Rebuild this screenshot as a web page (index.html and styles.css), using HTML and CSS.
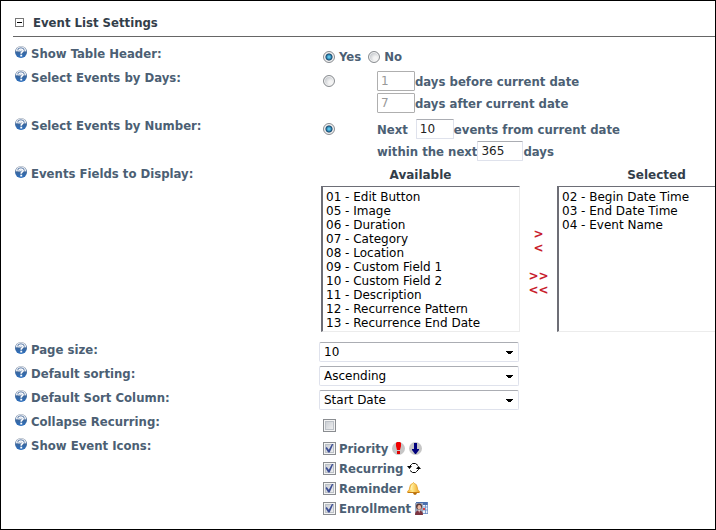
FILE: index.html
```html
<!DOCTYPE html>
<html lang="en">
<head>
<meta charset="utf-8">
<title>Event List Settings</title>
<link rel="stylesheet" href="styles.css">
</head>
<body>
<svg class="defs" width="0" height="0" aria-hidden="true">
  <defs>
    <linearGradient id="ball" x1="0" y1="0" x2="0" y2="1">
      <stop offset="0" stop-color="#8d97a5"/>
      <stop offset="0.4" stop-color="#3f6596"/>
      <stop offset="1" stop-color="#2a6fc0"/>
    </linearGradient>
    <linearGradient id="gold" x1="0" y1="0" x2="1" y2="0">
      <stop offset="0" stop-color="#f4ac28"/>
      <stop offset="0.4" stop-color="#ffe88a"/>
      <stop offset="1" stop-color="#eda020"/>
    </linearGradient>
    <symbol id="help" viewBox="0 0 12 12">
      <circle cx="6" cy="6" r="6" fill="url(#ball)"/>
      <path d="M.7 5.600A5.300 5.300 0 0 1 11.300 5.600Q9.800 5 8.500 5.500L3.400 5.500Q2 5 .7 5.600Z" fill="#e6eaf0"/>
      <path d="M3.600 4.300Q3.800 2.600 5.900 2.600T8.300 4.300Q8.300 5.300 7.100 6Q6.300 6.500 6.300 7.200" fill="none" stroke="#44699c" stroke-width="2.400"/>
      <path d="M3.800 4.500Q4 3 5.900 3T8.100 4.400Q8.100 5.300 7 6Q6.200 6.500 6.200 7.800" fill="none" stroke="#fff" stroke-width="1.600"/>
      <rect x="5.300" y="8.700" width="1.900" height="1.800" fill="#fff"/>
    </symbol>
  </defs>
</svg>
<form class="panel">
  <header class="title">
    <button type="button" class="toggle" aria-label="Collapse section"></button>
    <h1>Event List Settings</h1>
  </header>
  <div class="settings">
    <div class="row">
      <div class="label"><svg class="help"><use href="#help"/></svg><span>Show Table Header:</span></div>
      <div class="field single">
        <input type="radio" name="header" id="yes" checked><label for="yes">Yes</label>
        <input type="radio" name="header" id="no"><label for="no">No</label>
      </div>
    </div>
    <div class="row">
      <div class="label"><svg class="help"><use href="#help"/></svg><span>Select Events by Days:</span></div>
      <div class="field choice">
        <input type="radio" name="mode" aria-label="Select events by days">
        <div class="lines">
          <div class="line"><input type="text" id="before" value="1" disabled><label for="before">days before current date</label></div>
          <div class="line"><input type="text" id="after" value="7" disabled><label for="after">days after current date</label></div>
        </div>
      </div>
    </div>
    <div class="row">
      <div class="label"><svg class="help"><use href="#help"/></svg><span>Select Events by Number:</span></div>
      <div class="field choice">
        <input type="radio" name="mode" aria-label="Select events by number" checked>
        <div class="lines">
          <div class="line"><label for="count" class="spaced">Next</label><input type="text" id="count" value="10"><span>events from current date</span></div>
          <div class="line"><label for="within">within the next</label><input type="text" id="within" class="wide" value="365"><span>days</span></div>
        </div>
      </div>
    </div>
    <div class="row">
      <div class="label"><svg class="help"><use href="#help"/></svg><span>Events Fields to Display:</span></div>
      <div class="field picker">
        <div class="list">
          <label for="available">Available</label>
          <select id="available" multiple size="10">
            <option>01 - Edit Button</option><option>05 - Image</option><option>06 - Duration</option><option>07 - Category</option><option>08 - Location</option><option>09 - Custom Field 1</option><option>10 - Custom Field 2</option><option>11 - Description</option><option>12 - Recurrence Pattern</option><option>13 - Recurrence End Date</option>
          </select>
        </div>
        <div class="moves">
          <button type="button" aria-label="Add">&gt;</button>
          <button type="button" aria-label="Remove">&lt;</button>
          <button type="button" class="all" aria-label="Add all">&gt;&gt;</button>
          <button type="button" aria-label="Remove all">&lt;&lt;</button>
        </div>
        <div class="list">
          <label for="selected">Selected</label>
          <select id="selected" multiple size="10">
            <option>02 - Begin Date Time</option><option>03 - End Date Time</option><option>04 - Event Name</option>
          </select>
        </div>
      </div>
    </div>
    <div class="row short">
      <label class="label" for="size"><svg class="help"><use href="#help"/></svg><span>Page size:</span></label>
      <div class="field drop"><select id="size"><option>10</option></select></div>
    </div>
    <div class="row short">
      <label class="label" for="sorting"><svg class="help"><use href="#help"/></svg><span>Default sorting:</span></label>
      <div class="field drop"><select id="sorting"><option>Ascending</option></select></div>
    </div>
    <div class="row short">
      <label class="label" for="column"><svg class="help"><use href="#help"/></svg><span>Default Sort Column:</span></label>
      <div class="field drop"><select id="column"><option>Start Date</option></select></div>
    </div>
    <div class="row short">
      <label class="label" for="collapse"><svg class="help"><use href="#help"/></svg><span>Collapse Recurring:</span></label>
      <div class="field single"><input type="checkbox" id="collapse"></div>
    </div>
    <div class="row">
      <div class="label"><svg class="help"><use href="#help"/></svg><span>Show Event Icons:</span></div>
      <div class="field checks">
        <div class="line"><input type="checkbox" id="priority" checked><label for="priority">Priority</label>
          <svg class="icon" width="13" height="13" viewBox="0 0 13 13"><circle cx="6.500" cy="6.500" r="6.500" fill="#c6c6c6"/><path d="M5 0H8L9 1V4L8 8H5L4 4V1Z" fill="#f00000"/><rect x="5" y="9" width="3" height="3" fill="#e00000"/></svg>
          <svg class="icon" width="13" height="13" viewBox="0 0 13 13"><circle cx="6.500" cy="6.500" r="6.500" fill="#c6c6c6"/><path d="M5 1H8V7H10V8L7 12H6L3 8V7H5Z" fill="#00007c"/></svg>
        </div>
        <div class="line"><input type="checkbox" id="recurring" checked><label for="recurring">Recurring</label>
          <svg class="icon" width="14" height="12" viewBox="0 0 14 12"><path d="M2.500 6V4.500L4.500 2.500 5.500 1.500H8.500L11 3.500M11.500 5V7.500L9.500 9.500 8.500 10.500H5.500L3 8.500" fill="none" stroke="#000" stroke-width="1"/><path d="M0 4H5L2.500 7ZM9 7H14L11.500 4Z" fill="#000"/></svg>
        </div>
        <div class="line"><input type="checkbox" id="reminder" checked><label for="reminder">Reminder</label>
          <svg class="icon" width="13" height="13" viewBox="0 0 13 13"><path d="M5.500 1.500Q6.500-.5 7.500 1.500 10 2.200 10.200 5 10.300 8 12.500 9.500V10.500H.5V9.500Q2.700 8 2.800 5 3 2.200 5.500 1.500Z" fill="url(#gold)" stroke="#e09a20" stroke-width=".7"/><path d="M1 10.500H12" stroke="#c47c10"/><path d="M6 11H10L9 12.700H7Z" fill="#b56b08"/><path d="M5 3.500Q4.200 5 4 8" stroke="#fff6c4" fill="none"/></svg>
        </div>
        <div class="line"><input type="checkbox" id="enrollment" checked><label for="enrollment">Enrollment</label>
          <svg class="icon" width="13" height="13" viewBox="0 0 13 13"><rect x="1" width="12" height="12" fill="#eef2fa"/><path d="M1 0H13V3H1Z" fill="#4a6eae"/><path d="M8 5H13M8 8H13M8 11.500H13M10.500 3V12M12.700 0V12" stroke="#6a8bc4" stroke-width=".8"/><rect x="8" y="6" width="2" height="2" fill="#e04040"/><rect x="0" y="1" width="8" height="11" fill="#9aa6bb"/><circle cx="4" cy="4.500" r="3" fill="#5a3a38"/><ellipse cx="4.300" cy="5.300" rx="1.800" ry="2.300" fill="#e9b9a4"/><path d="M0 13Q0 8.500 4 8.500T8 13Z" fill="#7c3440"/><path d="M3.200 8H5L4.200 11Z" fill="#f4dcd8"/></svg>
        </div>
      </div>
    </div>
  </div>
</form>
</body>
</html>
```
FILE: styles.css
```css
* { box-sizing: border-box; }
body {
  margin: 0;
  background: #fff;
  color: #4c5f74;
  font: bold 12px/20px "DejaVu Sans Condensed", "DejaVu Sans", sans-serif;
}
.defs { position: absolute; }
.panel {
  min-height: 100vh;
  padding-left: 12px;
  border: 1px solid #000;
  overflow: hidden;
}
.title {
  display: flex;
  align-items: center;
  gap: 9px;
  height: 36px;
  padding: 8px 0 0 2px;
  border-bottom: 1px solid #666;
}
.title h1 {
  margin: 0;
  color: #333e4a;
  font-size: 13px;
}
.toggle {
  display: flex;
  align-items: center;
  justify-content: center;
  width: 9px;
  height: 9px;
  padding: 0;
  border: 1px solid #777;
  background: #fff;
}
.toggle::before {
  content: "";
  flex: none;
  width: 5px;
  height: 1px;
  background: #000;
}
.settings { padding-top: 4px; }
.row {
  display: grid;
  grid-template-columns: 306px minmax(0, 1fr);
}
.short { height: 24px; }
.label {
  display: flex;
  gap: 4px;
  height: 24px;
  padding-left: 2px;
  font-size: 13px;
  line-height: 26px;
}
.help {
  flex: none;
  width: 12px;
  height: 12px;
  margin-top: 5px;
}
.field { padding-left: 4px; font-size: 13px; }
input, select, button { margin: 0; font: 12px "DejaVu Sans", sans-serif; }
input[type="radio"], input[type="checkbox"] {
  appearance: none;
  flex: none;
  width: 12px;
  height: 12px;
  border: 1px solid #8a8d91;
}
input[type="radio"] {
  border-radius: 50%;
  background: radial-gradient(circle at 65% 65%, #f4f4f4 20%, #bfc3c8 75%);
  box-shadow: inset 0 0 0 1px #f4f4f4;
}
input[type="radio"]:checked {
  background: radial-gradient(circle, #5cc3ea 0 1px, #14527c 3px, #0c2c4c 3px, #e4e6e8 4px);
}
input[type="checkbox"] {
  display: grid;
  place-items: center;
  width: 13px;
  height: 13px;
  background: linear-gradient(135deg, #c3c7cd, #f6f6f6);
  box-shadow: inset 0 0 0 1px #f4f4f4, inset 0 0 0 2px #bcc1c7;
}
input[type="checkbox"]:checked::before {
  content: "";
  width: 9px;
  height: 9px;
  background: #3d4f95;
  clip-path: polygon(5% 50%, 20% 40%, 42% 70%, 80% 0, 95% 0, 52% 100%, 35% 100%);
}
.single {
  display: flex;
  align-items: center;
  height: 24px;
  padding-top: 8px;
}
.single label { margin: 0 7px 0 4px; }
.choice {
  display: grid;
  grid-template-columns: 54px minmax(0, 1fr);
  height: 48px;
  padding-top: 6px;
}
.choice > input { margin-top: 4px; }
.lines { display: grid; gap: 2px; }
.line {
  display: flex;
  align-items: center;
  height: 20px;
  white-space: nowrap;
}
.lines label, .lines span { padding-top: 2px; }
.spaced { margin-right: 8px; }
input[type="text"] {
  width: 38px;
  height: 20px;
  padding: 0 3px;
  border: 1px solid #dfe2ec;
  border-top-color: #abadb3;
  border-radius: 1px;
  background: #fff;
  color: #222;
}
input[type="text"].wide { width: 46px; }
input[type="text"]:disabled { border-color: #afafaf; color: #999; }
.picker { display: flex; height: 176px; padding: 4px 0 0 2px; }
.list { display: grid; flex: none; width: 199px; grid-template-rows: 21px 146px; }
.list label {
  color: #333e4a;
  font: bold 12px/20px "DejaVu Sans", sans-serif;
  text-align: center;
}
.list select {
  width: 100%;
  height: 146px;
  padding: 3px;
  border: 1px solid #ececec;
  border-top-color: #6d6e76;
  border-left: 2px solid #6d6e76;
  border-radius: 0;
  background: #fff;
  color: #000;
  overflow: hidden;
}
.list option { height: 14px; min-height: 14px; padding: 0; line-height: 14px; }
.moves {
  display: flex;
  flex: none;
  flex-direction: column;
  width: 37px;
  padding-top: 62px;
}
.moves button {
  height: 14px;
  padding: 0;
  border: 0;
  background: none;
  color: #c8202c;
  font-weight: bold;
  line-height: 14px;
}
.moves .all { margin-top: 14px; }
.drop { padding: 5px 0 0; }
.drop select {
  display: block;
  appearance: none;
  width: 200px;
  height: 20px;
  padding: 0 4px;
  border: 1px solid #dfe2ec;
  border-top-color: #abadb3;
  border-radius: 2px;
  background:
    linear-gradient(to bottom left, #000 50%, transparent 50%) no-repeat right 8px top 8px / 4px 4px,
    linear-gradient(to bottom right, #000 50%, transparent 50%) no-repeat right 4px top 8px / 4px 4px;
  color: #000;
}
.checks { padding-top: 5px; }
.checks label { margin-left: 3px; padding-top: 1px; }
.icon { flex: none; margin-left: 4px; }
```
